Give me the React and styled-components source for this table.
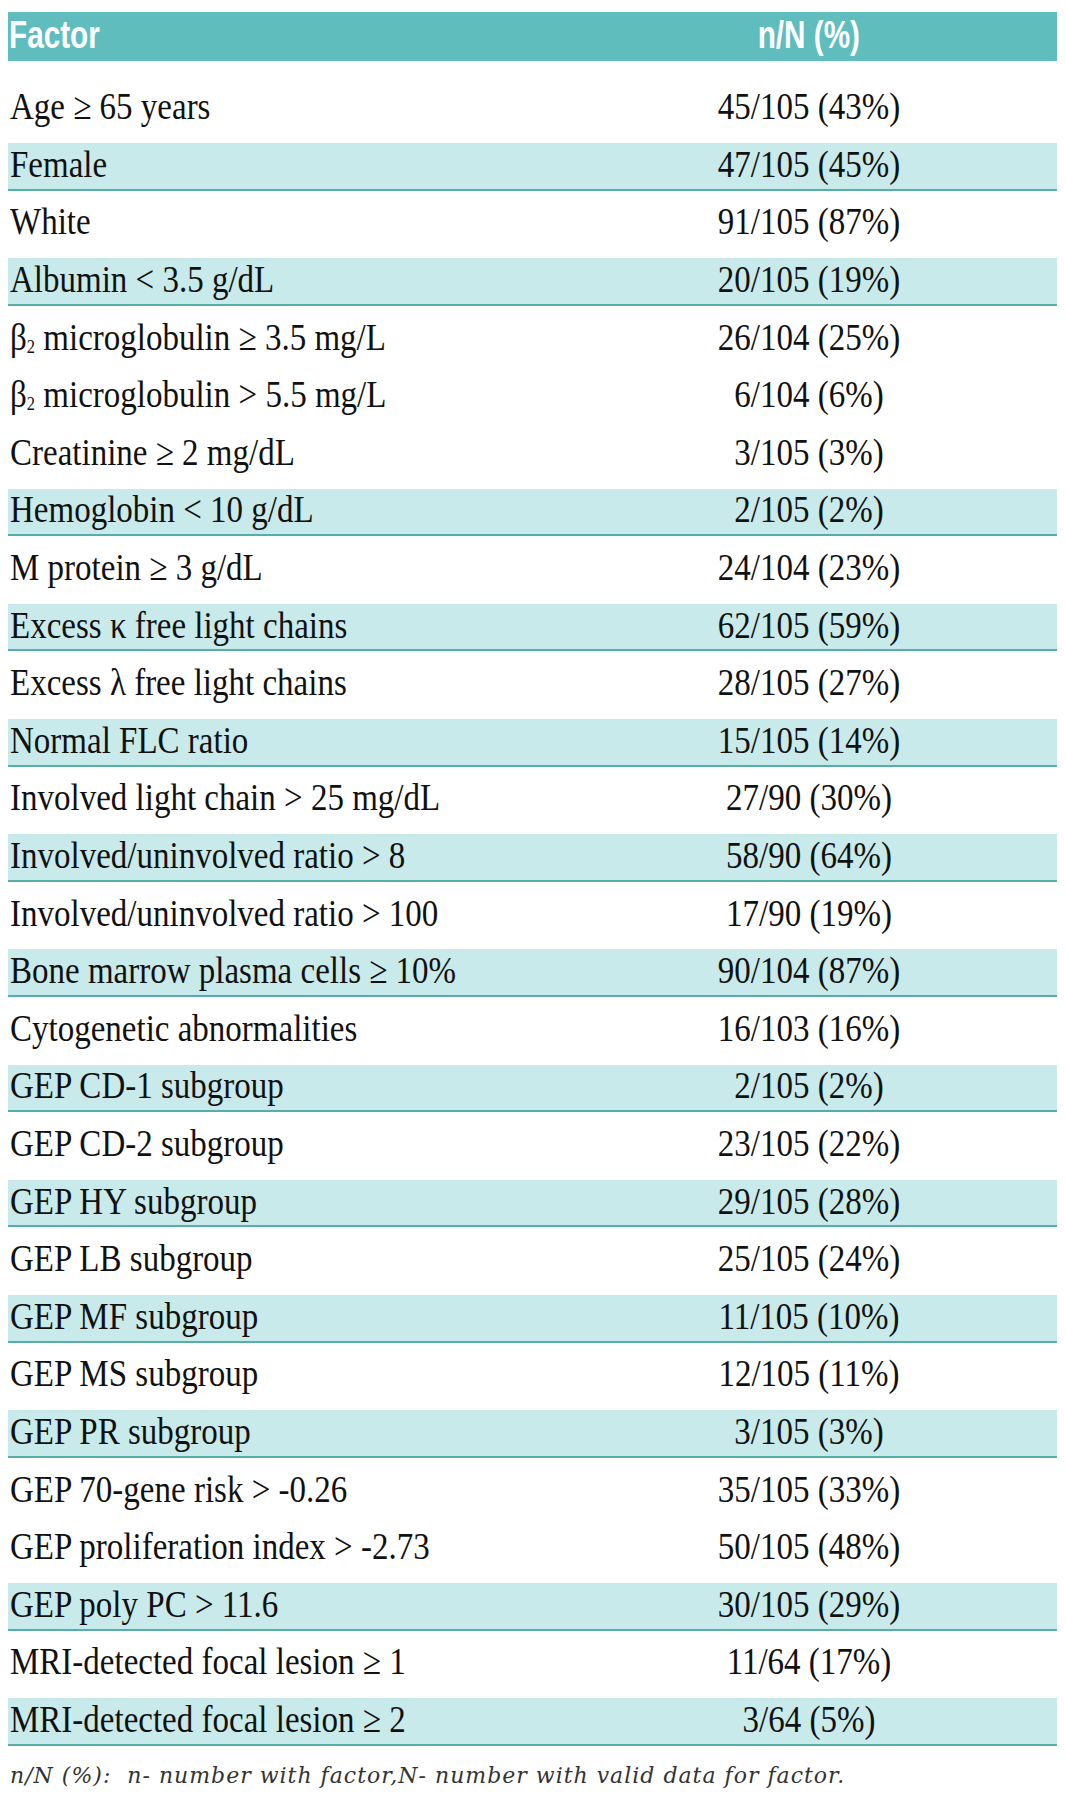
import React from "react";
import styled, { createGlobalStyle } from "styled-components";

const ROWS = [
  ["Age ≥ 65 years", "45/105 (43%)", false],
  ["Female", "47/105 (45%)", true],
  ["White", "91/105 (87%)", false],
  ["Albumin < 3.5 g/dL", "20/105 (19%)", true],
  ["β2 microglobulin ≥ 3.5 mg/L", "26/104 (25%)", false],
  ["β2 microglobulin > 5.5 mg/L", "6/104 (6%)", false],
  ["Creatinine ≥ 2 mg/dL", "3/105 (3%)", false],
  ["Hemoglobin < 10 g/dL", "2/105 (2%)", true],
  ["M protein ≥ 3 g/dL", "24/104 (23%)", false],
  ["Excess κ free light chains", "62/105 (59%)", true],
  ["Excess λ free light chains", "28/105 (27%)", false],
  ["Normal FLC ratio", "15/105 (14%)", true],
  ["Involved light chain > 25 mg/dL", "27/90 (30%)", false],
  ["Involved/uninvolved ratio > 8", "58/90 (64%)", true],
  ["Involved/uninvolved ratio > 100", "17/90 (19%)", false],
  ["Bone marrow plasma cells ≥ 10%", "90/104 (87%)", true],
  ["Cytogenetic abnormalities", "16/103 (16%)", false],
  ["GEP CD-1 subgroup", "2/105 (2%)", true],
  ["GEP CD-2 subgroup", "23/105 (22%)", false],
  ["GEP HY subgroup", "29/105 (28%)", true],
  ["GEP LB subgroup", "25/105 (24%)", false],
  ["GEP MF subgroup", "11/105 (10%)", true],
  ["GEP MS subgroup", "12/105 (11%)", false],
  ["GEP PR subgroup", "3/105 (3%)", true],
  ["GEP 70-gene risk > -0.26", "35/105 (33%)", false],
  ["GEP proliferation index > -2.73", "50/105 (48%)", false],
  ["GEP poly PC > 11.6", "30/105 (29%)", true],
  ["MRI-detected focal lesion ≥ 1", "11/64 (17%)", false],
  ["MRI-detected focal lesion ≥ 2", "3/64 (5%)", true],
];

const Global = createGlobalStyle`
  body {
    margin: 0;
    background: #fff;
  }
`;

const Page = styled.div`
  width: 1049px;
  padding: 12px 0 0 8px;
`;

const Header = styled.div`
  display: grid;
  grid-template-columns: 553px 1fr;
  align-items: center;
  height: 49px;
  background: #5fbebd;
  color: #fff;
  font-family: "Liberation Sans", Arial, sans-serif;
  font-weight: 700;
  font-size: 33px;
`;

const HeadCell = styled.div`
  padding-left: ${(p) => (p.$center ? 0 : 1)}px;
  padding-bottom: 4px;
  text-align: ${(p) => (p.$center ? "center" : "left")};
  line-height: 1;
`;

const Squeeze = styled.span`
  display: inline-block;
  transform: scale(0.9, 1.18);
  transform-origin: ${(p) => (p.$center ? "center" : "left")} center;
`;

const List = styled.div`
  display: flex;
  flex-direction: column;
  gap: 10px;
  padding-top: 24.5px;
`;

const Row = styled.div`
  display: grid;
  grid-template-columns: 553px 1fr;
  align-items: center;
  box-sizing: border-box;
  height: 47.6px;
  background: ${(p) => (p.$shaded ? "#c8eaea" : "transparent")};
  border-bottom: 2px solid ${(p) => (p.$shaded ? "#55aeab" : "transparent")};
  font-family: "Liberation Serif", "Times New Roman", serif;
  font-size: 33px;
  color: #111;
`;

const Cell = styled.div`
  padding-left: ${(p) => (p.$center ? 0 : 2)}px;
  text-align: ${(p) => (p.$center ? "center" : "left")};
  white-space: nowrap;
  line-height: 1;
  padding-bottom: 3px;
`;

const Tall = styled.span`
  display: inline-block;
  transform: scaleY(1.17);
`;

const Sub = styled.sub`
  font-size: 0.5em;
  vertical-align: -0.15em;
`;

const Note = styled.div`
  margin-top: 17px;
  padding-left: 2px;
  font-family: "DejaVu Serif", "Liberation Serif", serif;
  font-style: italic;
  font-size: 22px;
  color: #333;
  letter-spacing: 1px;
  white-space: nowrap;
`;

const label = (text) => {
  if (text.startsWith("β2")) {
    return (
      <>
        β<Sub>2</Sub>
        {text.slice(2)}
      </>
    );
  }
  return text;
};

export default function App() {
  return (
    <Page>
      <Global />
      <Header>
        <HeadCell>
          <Squeeze>Factor</Squeeze>
        </HeadCell>
        <HeadCell $center>
          <Squeeze $center>n/N (%)</Squeeze>
        </HeadCell>
      </Header>
      <List>
        {ROWS.map(([factor, value, shaded]) => (
          <Row key={factor} $shaded={shaded}>
            <Cell>
              <Tall>{label(factor)}</Tall>
            </Cell>
            <Cell $center>
              <Tall>{value}</Tall>
            </Cell>
          </Row>
        ))}
      </List>
      <Note>n/N (%):&nbsp; n- number with factor,N- number with valid data for factor.</Note>
    </Page>
  );
}
